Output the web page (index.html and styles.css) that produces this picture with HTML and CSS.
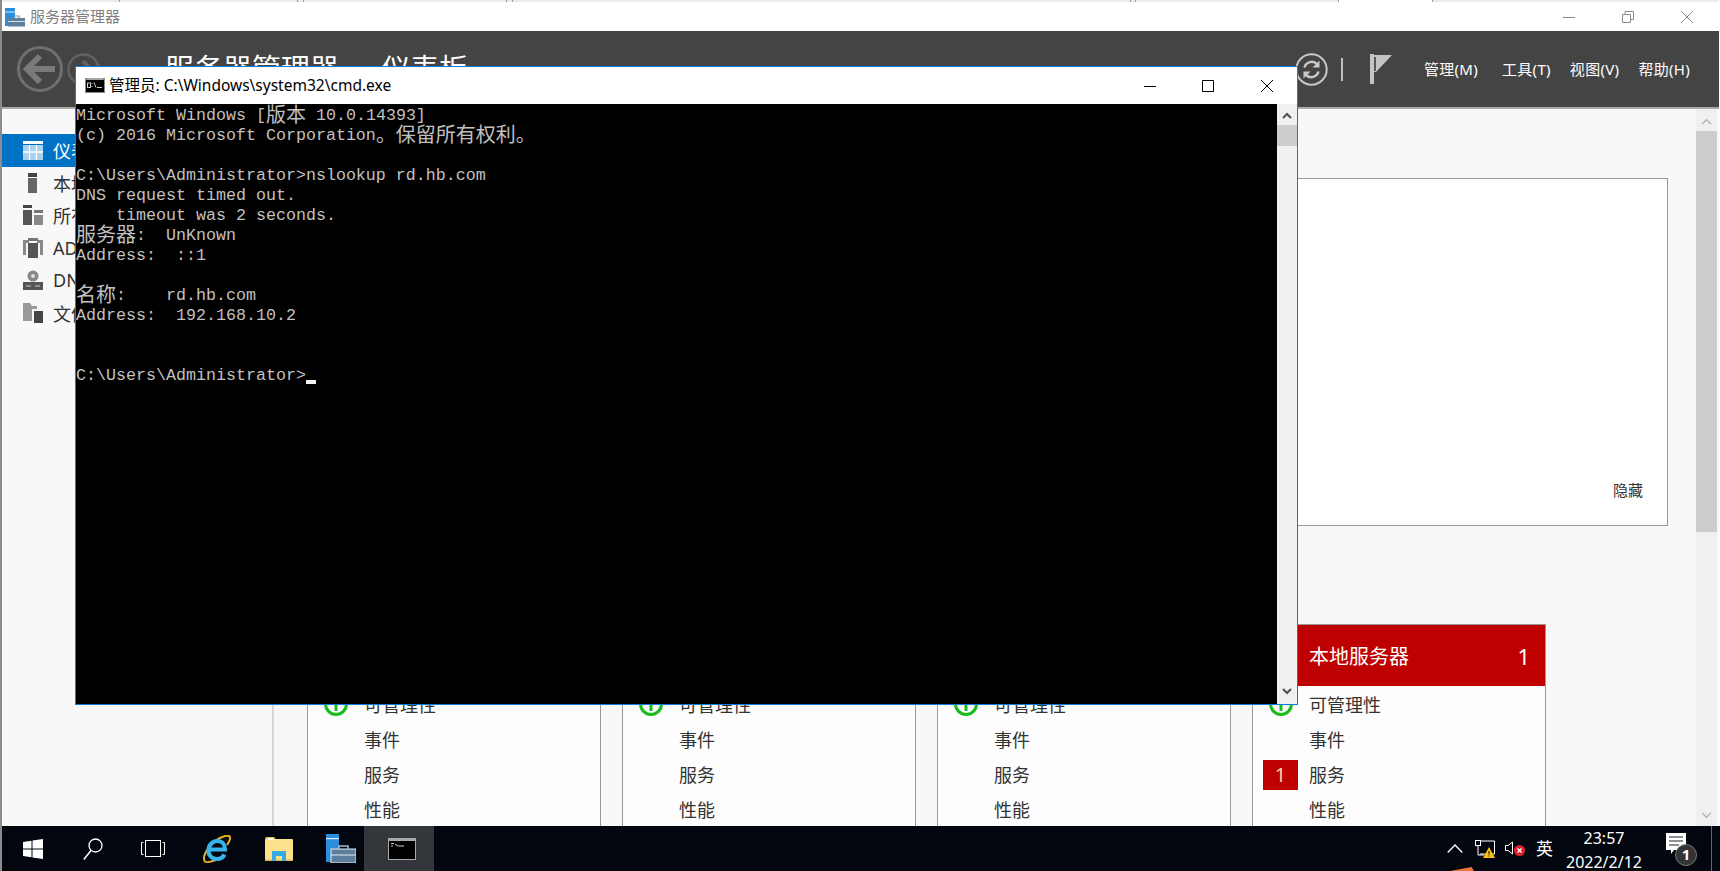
FILE: index.html
```html
<!DOCTYPE html>
<html lang="zh-CN">
<head>
<meta charset="utf-8">
<title>服务器管理器</title>
<link rel="stylesheet" href="styles.css">
</head>
<body>
<div class="desktop">
  <div class="server-window">
    <div class="top-strip">
      <i class="seg seg-a"></i><i class="seg seg-b"></i><i class="seg seg-c"></i><i class="seg seg-d"></i><i class="seg seg-e"></i><i class="seg seg-f"></i><i class="seg seg-g"></i><i class="seg seg-h"></i><i class="seg seg-i"></i>
    </div>
    <div class="titlebar">
      <svg class="app-icon" viewBox="0 0 20 20"><rect x="0" y="1" width="10" height="18" fill="#2b8ddb"/><rect x="0" y="4.5" width="10" height="1" fill="#d8ecfa"/><rect x="3" y="11" width="17" height="8.5" fill="#5d7f9c"/><rect x="3" y="14" width="17" height="1" fill="#d5e0e8"/><path d="M9 11V9h5v2" fill="none" stroke="#7e96aa" stroke-width="1.2"/></svg>
      <span class="titlebar-text">服务器管理器</span>
      <div class="win-controls">
        <svg class="wc" viewBox="0 0 12 12"><path d="M0 6.500h12" stroke="#8a8a8a" fill="none"/></svg>
        <svg class="wc" viewBox="0 0 12 12"><path d="M.5 3.500h8v8h-8zM3 3.500V.5h8.500v8H8.500" stroke="#8a8a8a" fill="none"/></svg>
        <svg class="wc" viewBox="0 0 12 12"><path d="M0 0l12 12M12 0L0 12" stroke="#8a8a8a" fill="none"/></svg>
      </div>
    </div>
    <header class="header">
      <svg class="nav-back" viewBox="0 0 46 46"><circle cx="23" cy="23" r="21.500" fill="none" stroke="#6f6f6f" stroke-width="3"/><path d="M23 10L10 23l13 13M11 23h27" fill="none" stroke="#7a7a7a" stroke-width="6"/></svg>
      <svg class="nav-forward" viewBox="0 0 33 33"><circle cx="16.500" cy="16.500" r="15" fill="none" stroke="#626262" stroke-width="2.500"/><path d="M16 8l8 8.500-8 8.500M8 16.500h15" fill="none" stroke="#626262" stroke-width="4"/></svg>
      <div class="crumb"><span>服务器管理器</span><span class="crumb-sep">▸</span><span>仪表板</span></div>
      <svg class="refresh" viewBox="0 0 33 33"><circle cx="16.500" cy="16.500" r="15.200" fill="none" stroke="#c8c8c8" stroke-width="2"/><path d="M9.500 14.500a7.500 7.500 0 0 1 12.500-3.500l1.500 1.500M23.500 18.500a7.500 7.500 0 0 1-12.500 3.500l-1.500-1.500" fill="none" stroke="#c8c8c8" stroke-width="2.500"/><path d="M24.500 7.500v7h-7zM8.500 25.500v-7h7z" fill="#c8c8c8"/></svg>
      <i class="header-divider"></i>
      <svg class="flag" viewBox="0 0 22 30"><rect x="0" y="0" width="4" height="30" fill="#c4c4c4"/><path d="M4 1h18L6 18H4z" fill="#c4c4c4"/><rect x="4" y="3" width="2" height="14" fill="#555"/></svg>
      <nav class="menu"><span>管理(M)</span><span>工具(T)</span><span>视图(V)</span><span>帮助(H)</span></nav>
    </header>
    <div class="main">
      <aside class="sidebar">
        <div class="side-item side-active">
          <svg class="side-icon" viewBox="0 0 20 20"><rect y="1" width="20" height="3" fill="#fff"/><rect y="5" width="20" height="15" fill="#a9d2ee"/><path d="M6.500 5v15M13.500 5v15M0 12h20" stroke="#fff" stroke-width="1.300"/></svg>
          <span>仪表板</span>
        </div>
        <div class="side-item">
          <svg class="side-icon" viewBox="0 0 20 20"><rect x="5" y="0" width="9" height="4" fill="#444"/><rect x="5" y="5" width="9" height="15" fill="#666"/></svg>
          <span>本地服务器</span>
        </div>
        <div class="side-item">
          <svg class="side-icon" viewBox="0 0 20 20"><rect width="9" height="3" fill="#444"/><rect y="5" width="9" height="15" fill="#555"/><rect x="11" y="5" width="9" height="3" fill="#777"/><rect x="11" y="10" width="9" height="10" fill="#888"/></svg>
          <span>所有服务器</span>
        </div>
        <div class="side-item">
          <svg class="side-icon" viewBox="0 0 20 20"><path d="M0 2h6v3H3v12H0zM14 2h6v15h-3V5h-3z" fill="#888"/><rect x="5" y="0" width="10" height="3" fill="#777"/><rect x="5" y="5" width="10" height="15" fill="#555"/></svg>
          <span>AD DS</span>
        </div>
        <div class="side-item">
          <svg class="side-icon" viewBox="0 0 20 20"><circle cx="10" cy="6" r="5.500" fill="#888"/><circle cx="10" cy="6" r="2" fill="#ddd"/><rect y="12" width="20" height="8" fill="#555"/><path d="M3 16h5M12 16h5" stroke="#ccc"/></svg>
          <span>DNS</span>
        </div>
        <div class="side-item">
          <svg class="side-icon" viewBox="0 0 20 20"><path d="M0 0h7l2 3h5v3H9v12H0z" fill="#999"/><rect x="11" y="8" width="9" height="12" fill="#444"/></svg>
          <span>文件和存储服务</span>
        </div>
      </aside>
      <section class="content">
        <div class="welcome"><span class="hide-link">隐藏</span></div>
        <div class="cards">
          <article class="card">
            <div class="card-head"><span>AD DS</span><span class="card-count">1</span></div>
            <div class="card-row"><span class="slot"><svg class="ok" viewBox="0 0 24 24"><circle cx="12" cy="12" r="10.500" fill="none" stroke="#1cbb1c" stroke-width="3"/><path d="M12 6v13" stroke="#1cbb1c" stroke-width="3"/></svg></span>可管理性</div>
            <div class="card-row"><span class="slot"></span>事件</div>
            <div class="card-row"><span class="slot"></span>服务</div>
            <div class="card-row"><span class="slot"></span>性能</div>
          </article>
          <article class="card">
            <div class="card-head"><span>DNS</span><span class="card-count">1</span></div>
            <div class="card-row"><span class="slot"><svg class="ok" viewBox="0 0 24 24"><circle cx="12" cy="12" r="10.500" fill="none" stroke="#1cbb1c" stroke-width="3"/><path d="M12 6v13" stroke="#1cbb1c" stroke-width="3"/></svg></span>可管理性</div>
            <div class="card-row"><span class="slot"></span>事件</div>
            <div class="card-row"><span class="slot"></span>服务</div>
            <div class="card-row"><span class="slot"></span>性能</div>
          </article>
          <article class="card">
            <div class="card-head"><span>文件和存储服务</span><span class="card-count">1</span></div>
            <div class="card-row"><span class="slot"><svg class="ok" viewBox="0 0 24 24"><circle cx="12" cy="12" r="10.500" fill="none" stroke="#1cbb1c" stroke-width="3"/><path d="M12 6v13" stroke="#1cbb1c" stroke-width="3"/></svg></span>可管理性</div>
            <div class="card-row"><span class="slot"></span>事件</div>
            <div class="card-row"><span class="slot"></span>服务</div>
            <div class="card-row"><span class="slot"></span>性能</div>
          </article>
          <article class="card">
            <div class="card-head"><span>本地服务器</span><span class="card-count">1</span></div>
            <div class="card-row"><span class="slot"><svg class="ok" viewBox="0 0 24 24"><circle cx="12" cy="12" r="10.500" fill="none" stroke="#1cbb1c" stroke-width="3"/><path d="M12 6v13" stroke="#1cbb1c" stroke-width="3"/></svg></span>可管理性</div>
            <div class="card-row"><span class="slot"></span>事件</div>
            <div class="card-row"><span class="slot slot-alert">1</span>服务</div>
            <div class="card-row"><span class="slot"></span>性能</div>
          </article>
        </div>
      </section>
      <div class="main-scroll">
        <svg class="main-arrow" viewBox="0 0 12 8"><path d="M1 7l5-5 5 5" fill="none" stroke="#b0b0b0" stroke-width="1.500"/></svg>
        <div class="main-thumb"></div>
        <svg class="main-arrow main-arrow-down" viewBox="0 0 12 8"><path d="M1 1l5 5 5-5" fill="none" stroke="#b0b0b0" stroke-width="1.500"/></svg>
      </div>
    </div>
  </div>

  <footer class="taskbar">
    <svg class="tb-start" viewBox="0 0 20 20"><path d="M0 3l8.500-1.300V9.500H0zM9.500 1.500L20 0v9.500H9.500zM0 10.500h8.500v7.800L0 17zM9.500 10.500H20V20L9.500 18.500z" fill="#fff"/></svg>
    <svg class="tb-search" viewBox="0 0 20 22"><circle cx="12.500" cy="7.500" r="6.500" fill="none" stroke="#fff" stroke-width="1.300"/><path d="M8 12.500L.8 21.500" stroke="#fff" stroke-width="1.500"/></svg>
    <svg class="tb-view" viewBox="0 0 24 17"><rect x="4.500" y=".5" width="15" height="16" fill="none" stroke="#fff"/><path d="M2.500 2.500H.5v12h2M21.500 2.500h2v12h-2" fill="none" stroke="#fff"/></svg>
    <svg class="tb-ie" viewBox="0 0 29 28"><path d="M3 26C-1 22 8 8 18 3c5-2.500 9-3 10-1 1 2-1 5-3 8" fill="none" stroke="#e5b11f" stroke-width="2"/><path d="M2 26c2 2 7 1 12-1" fill="none" stroke="#d9a520" stroke-width="2"/><path d="M7.500 14.500h15.500c0-5-3-8.500-7.500-8.500-5 0-9 4-9 9.500 0 5 3.500 8.500 8.500 8.500 3.500 0 6-1.500 7.500-4.500" fill="none" stroke="#37b4ea" stroke-width="4.200"/></svg>
    <svg class="tb-folder" viewBox="0 0 28 24"><path d="M0 2q0-2 2-2h7l2 2.500H0z" fill="#f4c542"/><rect y="2" width="28" height="22" rx="1" fill="#fbe28a"/><rect y="22.500" width="28" height="1.500" fill="#e0b94d"/><path d="M7 24V14h14v10h-4v-5h-6v5z" fill="#35a9e6"/><rect x="3" y="1" width="5" height="2" fill="#fff"/></svg>
    <svg class="tb-server" viewBox="0 0 30 29"><rect x="0" y="0" width="13" height="28" fill="#2b8ddb"/><rect x="0" y="4" width="13" height="1.200" fill="#d8ecfa"/><rect x="5" y="15" width="25" height="14" fill="#5d7f9c" stroke="#e6edf2"/><path d="M5 21h25" stroke="#e6edf2"/><path d="M13 15v-3h9v3" fill="none" stroke="#a6b8c6" stroke-width="1.500"/></svg>
    <div class="tb-active">
      <svg class="tb-cmd" viewBox="0 0 28 22"><rect width="28" height="22" fill="#a8a8a8"/><rect x="1" y="3" width="26" height="18" fill="#000"/><path d="M3 5.500h3M3 8h2M7 6l3 2h6" stroke="#ccc" fill="none"/></svg>
    </div>
    <svg class="tray-chevron" viewBox="0 0 16 9"><path d="M.7 8.500L8 1l7.300 7.500" fill="none" stroke="#fff" stroke-width="1.300"/></svg>
    <svg class="tray-net" viewBox="0 0 20 18"><path d="M5 1h14.500v13H5M3 5v10h6" fill="none" stroke="#fff"/><rect x=".5" y=".5" width="5" height="5" fill="none" stroke="#fff"/><path d="M14 7l6 11H8z" fill="#fcbf14"/><path d="M14 11v3.500M14 15.500v1" stroke="#000"/></svg>
    <svg class="tray-vol" viewBox="0 0 20 15"><path d="M.5 4.500H3L7.500 1v12L3 9.500H.5z" fill="none" stroke="#fff"/><circle cx="14.500" cy="9.500" r="5.500" fill="#e0202c"/><path d="M12.500 7.500l4 4M16.500 7.500l-4 4" stroke="#fff" stroke-width="1.300"/></svg>
    <span class="tray-ime">英</span>
    <div class="clock"><span>23:57</span><span>2022/2/12</span></div>
    <div class="notify">
      <svg class="notify-bubble" viewBox="0 0 20 22"><path d="M0 0h20v17H8l-3 4v-4H0z" fill="#fff"/><path d="M3 4h14M3 8h14M3 12h10" stroke="#222" stroke-width="1.200"/></svg>
      <span class="notify-count">1</span>
    </div>
    <i class="tray-line"></i>
    <i class="orange-mark"></i>
  </footer>

  <div class="cmd-window">
    <div class="cmd-title">
      <svg class="cmd-icon" viewBox="0 0 20 15"><rect width="20" height="15" fill="#888"/><rect x="1" y="2" width="18" height="12" fill="#000"/><path d="M2 1h16" stroke="#ddd" stroke-width=".7"/><rect x="2.500" y="5" width="3" height="4.500" fill="none" stroke="#ccc"/><path d="M7 5v1M7 8v1M9 4.500l2 5M12 9.500h5" stroke="#ccc"/></svg>
      <span class="cmd-title-text">管理员: C:\Windows\system32\cmd.exe</span>
      <div class="cmd-controls">
        <svg class="cc cc-min" viewBox="0 0 12 12"><path d="M0 6.500h12" stroke="#000" fill="none"/></svg>
        <svg class="cc cc-max" viewBox="0 0 12 12"><path d="M.5.500h11v11H.5z" stroke="#000" fill="none"/></svg>
        <svg class="cc cc-close" viewBox="0 0 12 12"><path d="M0 0l12 12M12 0L0 12" stroke="#000" fill="none"/></svg>
      </div>
    </div>
    <div class="cmd-body">
      <div class="console">
        <div class="line">Microsoft Windows [<span class="cjk">版本</span> 10.0.14393]</div>
        <div class="line">(c) 2016 Microsoft Corporation<span class="cjk">。保留所有权利。</span></div>
        <div class="line"></div>
        <div class="line">C:\Users\Administrator&gt;nslookup rd.hb.com</div>
        <div class="line">DNS request timed out.</div>
        <div class="line">    timeout was 2 seconds.</div>
        <div class="line"><span class="cjk">服务器</span>:  UnKnown</div>
        <div class="line">Address:  ::1</div>
        <div class="line"></div>
        <div class="line"><span class="cjk">名称</span>:    rd.hb.com</div>
        <div class="line">Address:  192.168.10.2</div>
        <div class="line"></div>
        <div class="line"></div>
        <div class="line">C:\Users\Administrator&gt;<i class="cursor"></i></div>
      </div>
      <div class="cmd-scroll">
        <svg class="cmd-arrow" viewBox="0 0 10 7"><path d="M1 6l4-4 4 4" fill="none" stroke="#505050" stroke-width="2"/></svg>
        <div class="cmd-thumb"></div>
        <svg class="cmd-arrow cmd-arrow-down" viewBox="0 0 10 7"><path d="M1 1l4 4 4-4" fill="none" stroke="#505050" stroke-width="2"/></svg>
      </div>
    </div>
  </div>
</div>
</body>
</html>
```

FILE: styles.css
```css
* { box-sizing: border-box; }
html, body { margin: 0; padding: 0; height: 100%; overflow: hidden; }
body { font-family: "Noto Sans", "Noto Sans CJK SC", sans-serif; background: #fff; }
.desktop { position: relative; width: 1720px; height: 871px; display: flex; flex-direction: column; border-left: 2px solid #8c8c8c; overflow: hidden; }
.server-window { flex: 1; min-height: 0; display: flex; flex-direction: column; border-right: 1px solid #fff; }

.top-strip { height: 2px; flex: none; display: flex; background: #ececec; }
.seg { display: block; height: 2px; border-right: 1px solid #9a9a9a; flex: none; }
.seg-a { width: 118px; }
.seg-b { width: 178px; }
.seg-c { width: 6px; }
.seg-d { width: 203px; }
.seg-e { width: 6px; }
.seg-f { width: 618px; }
.seg-g { width: 5px; }
.seg-h { width: 203px; }
.seg-i { width: 94px; background: #fff; }

.titlebar { height: 29px; flex: none; display: flex; align-items: center; background: #fff; padding-left: 3px; }
.app-icon { width: 20px; height: 20px; margin-right: 5px; }
.titlebar-text { font-size: 15px; color: #7f7f7f; margin-bottom: 2px; }
.win-controls { margin-left: auto; display: flex; padding-right: 26px; }
.wc { width: 12px; height: 12px; margin-left: 47px; }

.header { height: 78px; flex: none; display: flex; align-items: center; background: #444; border-bottom: 2px solid #aaa; color: #fff; }
.nav-back { width: 46px; height: 46px; margin-left: 15px; }
.nav-forward { width: 33px; height: 33px; margin-left: 4px; }
.crumb { margin-left: 65px; margin-bottom: 2px; font-size: 29px; display: flex; align-items: center; white-space: nowrap; line-height: 1; }
.crumb-sep { font-size: 12px; color: #bbb; margin: 0 18px; }
.refresh { width: 33px; height: 33px; margin-left: auto; }
.header-divider { display: block; width: 2px; height: 23px; background: #c0c0c0; margin-left: 13px; }
.flag { width: 22px; height: 30px; margin-left: 27px; }
.menu { display: flex; gap: 19px; margin: 0 29px 2px 32px; font-size: 15px; letter-spacing: .3px; color: #fff; white-space: nowrap; }
.menu span:first-child { margin-right: 5px; }

.main { flex: 1; min-height: 0; display: flex; background: #f8f8f8; }
.sidebar { width: 272px; flex: none; padding-top: 25px; border-right: 2px solid #d6d6d6; }
.side-item { height: 32.500px; display: flex; align-items: center; padding-left: 21px; font-size: 18px; color: #333; white-space: nowrap; }
.side-active { background: #0072c6; color: #fff; }
.side-icon { width: 20px; height: 20px; margin-right: 10px; flex: none; }

.content { flex: 1; min-width: 0; padding: 69px 0 0 33px; overflow: hidden; }
.welcome { position: relative; width: 1361px; height: 348px; background: #fff; border: 1px solid #999; display: flex; align-items: flex-end; justify-content: flex-end; padding: 0 24px 25px 0; }
.hide-link { font-size: 15px; color: #333; line-height: 20px; }
.cards { display: flex; gap: 21px; margin-top: 98px; }
.card { width: 294px; flex: none; background: #fdfdfd; border: 1px solid #999; border-bottom: 0; height: 300px; }
.card-head { height: 61px; background: #bf0000; color: #fff; font-size: 20px; display: flex; align-items: center; justify-content: space-between; padding: 0 15px 0 56px; }
.card-count { font-size: 22px; line-height: 1; }
.card-row { height: 35px; display: flex; align-items: center; font-size: 18px; color: #333; padding-left: 10px; }
.slot { width: 35px; height: 30px; margin-right: 11px; display: flex; align-items: center; justify-content: center; flex: none; }
.slot-alert { background: #bf0000; color: #f6cfae; font-size: 20px; margin-top: 2px; }
.ok { width: 24px; height: 24px; }

.main-scroll { position: relative; width: 21px; flex: none; margin-left: 0; margin-right: 2px; background: #f0f0f0; display: flex; flex-direction: column; }
.main-arrow { width: 11px; height: 7px; margin: 9px auto 6px; flex: none; }
.main-thumb { height: 401px; background: #cdcdcd; flex: none; }
.main-arrow-down { margin: auto auto 7px; }

.taskbar { height: 45px; flex: none; position: relative; display: flex; align-items: center; background: #01060f; color: #fff; }
.tb-start { width: 20px; height: 20px; margin-left: 21px; }
.tb-search { width: 20px; height: 22px; margin-left: 40px; }
.tb-view { width: 24px; height: 17px; margin-left: 38px; }
.tb-ie { width: 29px; height: 28px; margin-left: 37px; }
.tb-folder { width: 28px; height: 24px; margin-left: 34px; }
.tb-server { width: 30px; height: 29px; margin-left: 33px; }
.tb-active { width: 70px; height: 45px; margin-left: 8px; padding-left: 6px; background: #33363a; display: flex; align-items: center; justify-content: center; }
.tb-cmd { width: 28px; height: 22px; }
.tray-chevron { width: 16px; height: 9px; margin-left: auto; }
.tray-net { width: 20px; height: 18px; margin-left: 12px; }
.tray-vol { width: 20px; height: 15px; margin-left: 10px; }
.tray-ime { font-size: 17px; margin-left: 11px; width: 17px; line-height: 1; }
.clock { display: flex; flex-direction: column; align-items: center; font-size: 16px; line-height: 23.500px; margin: 4px 0 0 14px; width: 74px; white-space: nowrap; }
.notify { position: relative; width: 30px; height: 34px; margin-left: 25px; }
.notify-bubble { position: absolute; left: 0; top: 1px; width: 20px; height: 22px; }
.notify-count { position: absolute; left: 9px; top: 12px; width: 22px; height: 22px; border-radius: 50%; background: #333; border: 1px solid #777; font-size: 15px; font-weight: 700; line-height: 19px; text-align: center; }
.tray-line { display: block; width: 1px; height: 45px; background: #666; margin-left: 15px; margin-right: 8px; }
.orange-mark { position: absolute; left: 1448px; bottom: 0; width: 24px; height: 4px; background: #f0763a; clip-path: polygon(0 100%, 90% 0, 100% 100%); }

.cmd-window { position: absolute; left: 73px; top: 66px; width: 1223px; height: 639px; background: #fff; border: 1px solid #0f7dd8; display: flex; flex-direction: column; }
.cmd-title { height: 37px; flex: none; display: flex; align-items: center; padding-left: 9px; }
.cmd-icon { width: 20px; height: 15px; margin-right: 4px; }
.cmd-title-text { font-size: 15.500px; color: #000; white-space: nowrap; margin-bottom: 2px; }
.cmd-controls { margin-left: auto; display: flex; align-items: center; padding-right: 24px; }
.cc { width: 12px; height: 12px; }
.cc-max { margin-left: 46px; }
.cc-close { margin-left: 47px; }
.cmd-body { flex: 1; min-height: 0; display: flex; background: #000; }
.console { flex: 1; padding-top: 2px; font-family: "Liberation Mono", "Noto Sans CJK SC", monospace; font-size: 16.667px; color: #c0c0c0; overflow: hidden; }
.line { height: 20px; line-height: 20px; white-space: pre; }
.cjk { font-family: "Noto Sans CJK SC", sans-serif; font-size: 20px; line-height: 0; vertical-align: -2px; }
.cursor { display: inline-block; width: 10px; height: 4px; background: #f2f2f2; vertical-align: -4px; }
.cmd-scroll { width: 20px; flex: none; background: #f0f0f0; display: flex; flex-direction: column; }
.cmd-arrow { width: 10px; height: 7px; margin: 8px auto 6px; flex: none; }
.cmd-thumb { height: 21px; background: #cdcdcd; flex: none; }
.cmd-arrow-down { margin: auto auto 9px; }
```
